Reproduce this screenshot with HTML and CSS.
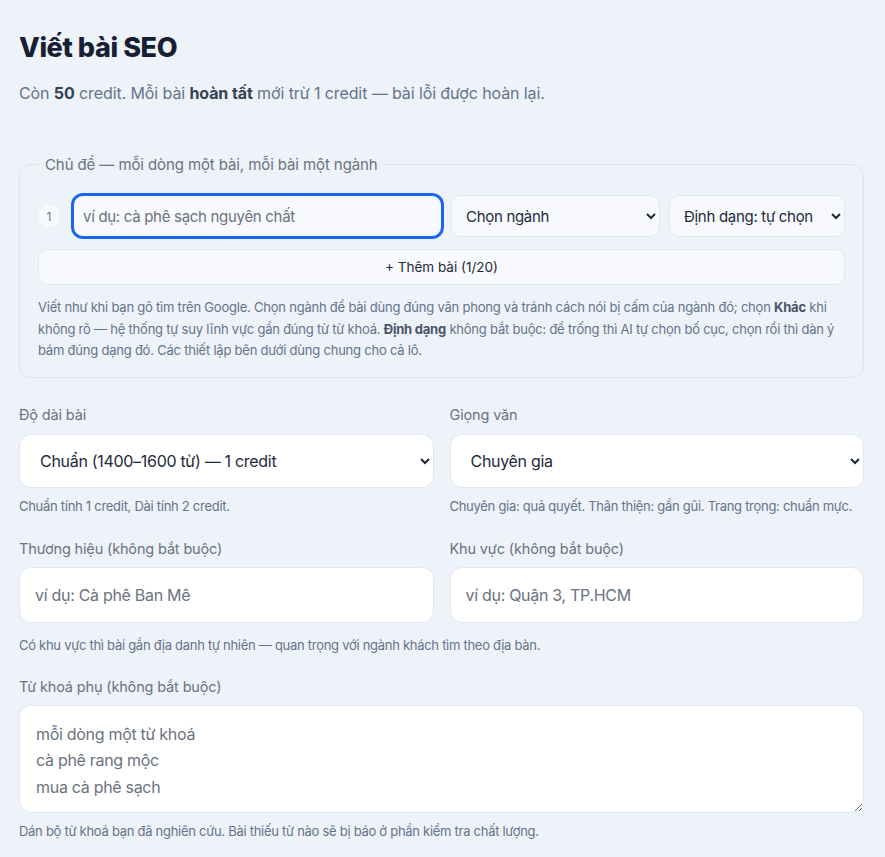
FILE: index.html
```html
<!DOCTYPE html>
<html lang="vi">
<head>
    <meta charset="UTF-8">
    <meta name="viewport" content="width=device-width, initial-scale=1.0">
    <title>Viết bài SEO</title>
    <link rel="stylesheet" href="styles.css">
</head>
<body>

<main class="page">
    <h1 class="page-title">Viết bài SEO</h1>
    <p class="lead">Còn <b>50</b> credit. Mỗi bài <b>hoàn tất</b> mới trừ 1 credit — bài lỗi được hoàn lại.</p>

    <!-- Danh sách chủ đề -->
    <fieldset class="topics">
        <legend>Chủ đề — mỗi dòng một bài, mỗi bài một ngành</legend>
        <div class="topic-row">
            <span class="topic-num">1</span>
            <input class="topic-input" type="text" placeholder="ví dụ: cà phê sạch nguyên chất" autofocus>
            <select class="topic-select industry">
                <option>Chọn ngành</option>
            </select>
            <select class="topic-select format">
                <option>Định dạng: tự chọn</option>
            </select>
        </div>
        <button class="add-topic" type="button">+ Thêm bài (1/20)</button>
        <p class="topics-hint">Viết như khi bạn gõ tìm trên Google. Chọn ngành để bài dùng đúng văn phong và tránh cách nói bị cấm của ngành đó; chọn <b>Khác</b> khi không rõ — hệ thống tự suy lĩnh vực gần đúng từ từ khoá. <b>Định dạng</b> không bắt buộc: để trống thì AI tự chọn bố cục, chọn rồi thì dàn ý bám đúng dạng đó. Các thiết lập bên dưới dùng chung cho cả lô.</p>
    </fieldset>

    <div class="two-cols">
        <div class="field">
            <label class="field-label">Độ dài bài</label>
            <select class="field-select">
                <option>Chuẩn (1400–1600 từ) — 1 credit</option>
                <option>Dài — 2 credit</option>
            </select>
            <p class="field-hint">Chuẩn tính 1 credit, Dài tính 2 credit.</p>
        </div>
        <div class="field">
            <label class="field-label">Giọng văn</label>
            <select class="field-select">
                <option>Chuyên gia</option>
                <option>Thân thiện</option>
                <option>Trang trọng</option>
            </select>
            <p class="field-hint">Chuyên gia: quả quyết. Thân thiện: gần gũi. Trang trọng: chuẩn mực.</p>
        </div>
    </div>

    <div class="two-cols brand-row">
        <div class="field">
            <label class="field-label">Thương hiệu (không bắt buộc)</label>
            <input class="field-input" type="text" placeholder="ví dụ: Cà phê Ban Mê">
        </div>
        <div class="field">
            <label class="field-label">Khu vực (không bắt buộc)</label>
            <input class="field-input" type="text" placeholder="ví dụ: Quận 3, TP.HCM">
        </div>
    </div>
    <p class="field-hint wide">Có khu vực thì bài gắn địa danh tự nhiên — quan trọng với ngành khách tìm theo địa bàn.</p>

    <div class="field keywords">
        <label class="field-label">Từ khoá phụ (không bắt buộc)</label>
        <textarea class="field-textarea" rows="3" placeholder="mỗi dòng một từ khoá
cà phê rang mộc
mua cà phê sạch"></textarea>
        <p class="field-hint">Dán bộ từ khoá bạn đã nghiên cứu. Bài thiếu từ nào sẽ bị báo ở phần kiểm tra chất lượng.</p>
    </div>
</main>

</body>
</html>
```

FILE: styles.css
```css
body, html {
    margin: 0;
    padding: 0;
    background-color: #eef2f9;
    color: #1e293b;
    font-family: Inter, "Noto Sans", sans-serif;
}
.page {
    padding: 24px 21px 20px 19px;
}
.page-title {
    font-size: 27px;
    font-weight: 800;
    letter-spacing: -0.4px;
    margin: 6px 0 0;
    line-height: 36px;
    color: #172033;
}
.lead {
    font-size: 16px;
    letter-spacing: -0.1px;
    color: #64748b;
    margin: 16px 0 0;
    line-height: 22px;
}
.lead b {
    color: #334155;
}

/* khung chủ đề */
.topics {
    margin: 51px 0 0;
    border: 1px solid #dfe5ee;
    border-radius: 12px;
    padding: 21px 18px 15px 18px;
}
.topics legend {
    font-size: 15px;
    letter-spacing: -0.1px;
    color: #6b7280;
    padding: 0 6px;
    margin-left: 1px;
}
.topic-row {
    display: flex;
    align-items: center;
    gap: 9px;
}
.topic-num {
    width: 22px;
    height: 22px;
    border-radius: 50%;
    background-color: #f7f9fc;
    color: #6b7280;
    font-size: 12px;
    display: flex;
    align-items: center;
    justify-content: center;
    margin-right: 4px;
}
.topic-input, .topic-select {
    height: 42px;
    box-sizing: border-box;
    border: 1px solid #e2e8f0;
    border-radius: 10px;
    background-color: #f7f9fd;
    font-family: inherit;
    font-size: 15px;
    letter-spacing: -0.3px;
    color: #1e293b;
}
.topic-input {
    flex: 1;
    padding: 0 9px;
    min-width: 0;
}
.topic-input::placeholder {
    color: #6b7280;
}
.topic-input:focus {
    outline: none;
    border-color: #1766f0;
    box-shadow: 0 0 0 2px #1766f0;
}
.topic-select {
    padding: 0 10px;
}
.topic-select.industry {
    width: 209px;
}
.topic-select.format {
    width: 176px;
}
.add-topic {
    display: block;
    width: 100%;
    height: 36px;
    margin-top: 12px;
    border: 1px solid #e2e8f0;
    border-radius: 10px;
    background-color: #f8fafd;
    font-family: inherit;
    font-size: 13.5px;
    color: #1e293b;
    cursor: pointer;
}
.topics-hint {
    font-size: 13px;
    letter-spacing: -0.22px;
    line-height: 21.5px;
    color: #64748b;
    margin: 12px 0 0;
}
.topics-hint b {
    color: #475569;
}

/* các trường cài đặt */
.two-cols {
    display: grid;
    grid-template-columns: 1fr 1fr;
    gap: 16px;
    margin-top: 27px;
}
.brand-row {
    margin-top: 24px;
}
.field {
    display: flex;
    flex-direction: column;
}
.field-label {
    font-size: 14.5px;
    letter-spacing: -0.15px;
    line-height: 20px;
    color: #6b7280;
    margin-bottom: 8px;
}
.field-select, .field-input, .field-textarea {
    box-sizing: border-box;
    width: 100%;
    border: 1px solid #e2e8f0;
    border-radius: 12px;
    background-color: #fff;
    font-family: inherit;
    font-size: 16px;
    letter-spacing: -0.3px;
    color: #1e293b;
}
.field-select {
    height: 54px;
    padding: 0 16px;
    margin-top: 1px;
}
.field-input {
    height: 56px;
    padding: 0 15px;
}
.field-input::placeholder, .field-textarea::placeholder {
    color: #6b7280;
}
.field-hint {
    font-size: 13px;
    letter-spacing: -0.28px;
    line-height: 18px;
    color: #64748b;
    margin: 9px 0 0;
}
.field-hint.wide {
    margin-top: 13px;
}
.keywords {
    margin-top: 23px;
}
.field-textarea {
    height: 108px;
    padding: 15px 16px;
    line-height: 26.5px;
    resize: vertical;
}
```
